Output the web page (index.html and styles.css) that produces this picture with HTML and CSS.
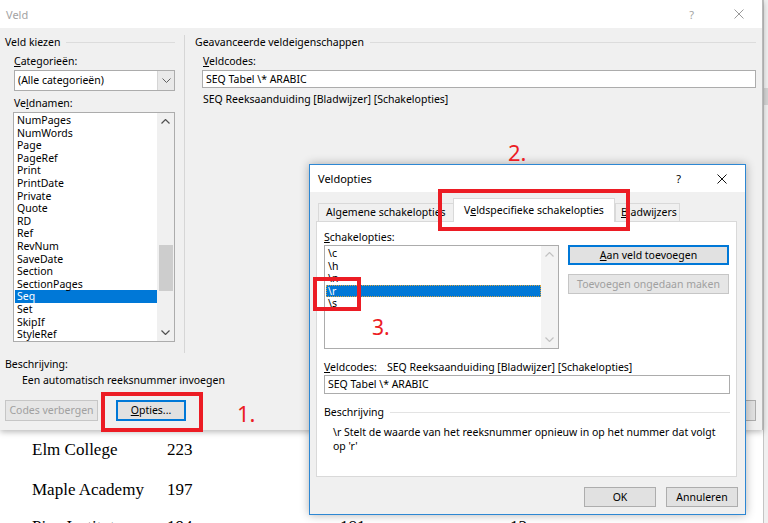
FILE: index.html
```html
<!DOCTYPE html>
<html lang="nl">
<head>
  <meta charset="UTF-8" />
  <meta name="viewport" content="width=device-width, initial-scale=1.0"/>
  <title>Veld</title>
  <link rel="stylesheet" href="styles.css">
</head>
<body>
<div class="screen">

  <div class="stage">
    <div class="veld">
      <div class="titlebar">
        <span class="title dim">Veld</span>
        <span class="help dim">?</span>
        <span class="close dim">
          <svg width="10" height="10" viewBox="0 0 10 10"><path d="M0.5 0.5 L9.5 9.5 M9.5 0.5 L0.5 9.5" stroke="#9a9a9a" stroke-width="1" fill="none"/></svg>
        </span>
      </div>

      <div class="veld-main">
        <div class="col-left">
          <div class="group-head"><span>Veld kiezen</span></div>
          <div class="indent">
            <div class="label"><u>C</u>ategorieën:</div>
            <div class="select">
              <span class="select-text">(Alle categorieën)</span>
              <span class="select-btn">
                <svg width="9" height="5" viewBox="0 0 9 5"><polyline points="0.5,0.5 4.5,4.5 8.5,0.5" stroke="#606060" fill="none"/></svg>
              </span>
            </div>
            <div class="label">Ve<u>l</u>dnamen:</div>
            <div class="listbox names">
              <ul class="items">
                <li>NumPages</li>
                <li>NumWords</li>
                <li>Page</li>
                <li>PageRef</li>
                <li>Print</li>
                <li>PrintDate</li>
                <li>Private</li>
                <li>Quote</li>
                <li>RD</li>
                <li>Ref</li>
                <li>RevNum</li>
                <li>SaveDate</li>
                <li>Section</li>
                <li>SectionPages</li>
                <li class="sel">Seq</li>
                <li>Set</li>
                <li>SkipIf</li>
                <li>StyleRef</li>
              </ul>
              <div class="vscroll">
                <span class="arrow">
                  <svg width="9" height="5" viewBox="0 0 9 5"><polyline points="0.5,4.5 4.5,0.5 8.5,4.5" stroke="#505050" stroke-width="1.2" fill="none"/></svg>
                </span>
                <div class="track"><div class="thumb"></div></div>
                <span class="arrow">
                  <svg width="9" height="5" viewBox="0 0 9 5"><polyline points="0.5,0.5 4.5,4.5 8.5,0.5" stroke="#505050" stroke-width="1.2" fill="none"/></svg>
                </span>
              </div>
            </div>
          </div>
        </div>

        <div class="col-right">
          <div class="group-head"><span>Geavanceerde veldeigenschappen</span></div>
          <div class="indent-r">
            <div class="label"><u>V</u>eldcodes:</div>
            <div class="input wide">SEQ Tabel \* ARABIC</div>
            <div class="syntax">SEQ Reeksaanduiding [Bladwijzer] [Schakelopties]</div>
          </div>
        </div>
      </div>

      <div class="veld-foot">
        <div class="label">Beschrijving:</div>
        <div class="desc">Een automatisch reeksnummer invoegen</div>
        <div class="btn-row">
          <div class="btn disabled codes">Codes verbergen</div>
          <div class="btn focus opties"><u>O</u>pties...</div>
          <div class="btn hidden-btn"></div>
        </div>
      </div>
    </div>

    <div class="doc">
      <div class="row"><span class="c1">Elm College</span><span class="c2">223</span></div>
      <div class="row"><span class="c1">Maple Academy</span><span class="c2">197</span></div>
      <div class="row last-row"><span class="c1">Pine Institute</span><span class="c2">194</span><span class="c3">181</span><span>13</span></div>
    </div>
  </div>

  <div class="edge"><div class="edge-thumb"></div></div>

  <div class="opts">
    <div class="titlebar opts-title">
      <span class="title">Veldopties</span>
      <span class="help">?</span>
      <span class="close">
        <svg width="10" height="10" viewBox="0 0 10 10"><path d="M0.5 0.5 L9.5 9.5 M9.5 0.5 L0.5 9.5" stroke="#111" stroke-width="1" fill="none"/></svg>
      </span>
    </div>

    <div class="tabs">
      <div class="tab first">Al<u>g</u>emene schakelopties</div>
      <div class="tab active">V<u>e</u>ldspecifieke schakelopties</div>
      <div class="tab last"><u>B</u>ladwijzers</div>
    </div>

    <div class="panel">
      <div class="label"><u>S</u>chakelopties:</div>
      <div class="switch-row">
        <div class="listbox switches">
          <ul class="items">
            <li>\c</li>
            <li>\h</li>
            <li>\n</li>
            <li class="sel focus-row">\r</li>
            <li>\s</li>
          </ul>
          <div class="vscroll light">
            <span class="arrow">
              <svg width="9" height="5" viewBox="0 0 9 5"><polyline points="0.5,4.5 4.5,0.5 8.5,4.5" stroke="#c2c2c2" stroke-width="1.2" fill="none"/></svg>
            </span>
            <div class="track"></div>
            <span class="arrow">
              <svg width="9" height="5" viewBox="0 0 9 5"><polyline points="0.5,0.5 4.5,4.5 8.5,0.5" stroke="#c2c2c2" stroke-width="1.2" fill="none"/></svg>
            </span>
          </div>
        </div>
        <div class="side-btns">
          <div class="btn focus"><u>A</u>an veld toevoegen</div>
          <div class="btn disabled">Toevoegen ongedaan maken</div>
        </div>
      </div>

      <div class="code-line"><span class="code-label"><u>V</u>eldcodes:</span>SEQ Reeksaanduiding [Bladwijzer] [Schakelopties]</div>
      <div class="input">SEQ Tabel \* ARABIC</div>

      <div class="group-head desc-head"><span>Beschrijving</span></div>
      <div class="switch-desc">\r Stelt de waarde van het reeksnummer opnieuw in op het nummer dat volgt<br>op 'r'</div>
    </div>

    <div class="opts-foot">
      <div class="btn">OK</div>
      <div class="btn">Annuleren</div>
    </div>
  </div>

  <div class="mark mark-1"></div>
  <div class="mark mark-2"></div>
  <div class="mark mark-3"></div>
  <div class="num num-1">1.</div>
  <div class="num num-2">2.</div>
  <div class="num num-3">3.</div>
</div>
</body>
</html>
```

FILE: styles.css
```css
* {
  box-sizing: border-box;
}
body {
  margin: 0;
  font-family: 'Noto Sans', sans-serif;
  font-size: 10.5px;
  color: #000;
  background-color: #fff;
}
u {
  text-decoration-thickness: 1px;
  text-underline-offset: 1px;
}
.screen {
  position: relative;
  display: flex;
  width: 768px;
  height: 523px;
  overflow: hidden;
}
.stage {
  width: 763px;
  flex: none;
}
.edge {
  flex: 1;
  background-color: #f0f0f0;
  border-left: 1px solid #c4c4c4;
}
.edge-thumb {
  margin-top: 88px;
  height: 17px;
  background-color: #d4d4d4;
}

/* outer dialog */
.veld {
  position: relative;
  height: 430px;
  background-color: #f0f0f0;
  border-right: 1px solid #b9b9b9;
  box-shadow: 0 2px 6px rgba(0,0,0,0.28);
}
.titlebar {
  display: flex;
  align-items: center;
  height: 28px;
  padding-left: 6px;
  background-color: #fff;
}
.title {
  flex: 1;
  font-size: 11px;
}
.dim {
  color: #a3a3a3;
}
.help {
  font-size: 11px;
  margin-right: 40px;
}
.close {
  display: flex;
  margin-right: 18px;
}
.veld-main {
  display: flex;
  height: 325px;
  padding-top: 7px;
}
.col-left {
  width: 185px;
  padding: 0 9px 0 5px;
  border-right: 1px solid #d6d6d6;
}
.col-right {
  flex: 1;
  padding: 0 6px 0 10px;
}
.group-head {
  display: flex;
  align-items: center;
  height: 14px;
  line-height: 14px;
  white-space: nowrap;
}
.group-head::after {
  content: "";
  flex: 1;
  margin-left: 6px;
  border-top: 1px solid #dcdcdc;
}
.indent {
  padding-left: 9px;
}
.indent-r {
  padding-left: 8px;
}
.label {
  height: 14px;
  line-height: 14px;
  margin-top: 5px;
}
.select {
  display: flex;
  width: 161px;
  height: 21px;
  margin-top: 2px;
  background-color: #fff;
  border: 1px solid #acacac;
}
.select-text {
  flex: 1;
  padding-left: 3px;
  line-height: 19px;
}
.select-btn {
  display: flex;
  align-items: center;
  justify-content: center;
  width: 17px;
  background-color: #e9e9e9;
  border-left: 1px solid #d5d5d5;
}
.listbox {
  display: flex;
  background-color: #fff;
  border: 1px solid #acacac;
}
.names {
  width: 162px;
  height: 230px;
  margin: 2px 0 0 -1px;
}
.items {
  flex: 1;
  list-style: none;
  margin: 0;
  padding: 1px 0 0 1px;
}
.items li {
  height: 12.6px;
  line-height: 12.6px;
  padding-left: 2px;
  white-space: nowrap;
}
.items li.sel {
  background-color: #0078d7;
  color: #fff;
}
.items li.focus-row {
  outline: 1px dotted #d9a441;
  outline-offset: -1px;
}
.vscroll {
  display: flex;
  flex-direction: column;
  width: 17px;
  background-color: #f0f0f0;
}
.arrow {
  display: flex;
  align-items: center;
  justify-content: center;
  height: 17px;
}
.track {
  flex: 1;
}
.thumb {
  margin: 115px 1px 0 2px;
  height: 46px;
  background-color: #cdcdcd;
}
.input {
  height: 19px;
  line-height: 17px;
  padding-left: 3px;
  background-color: #fff;
  border: 1px solid #acacac;
}
.input.wide {
  height: 18px;
  line-height: 16px;
  margin: 2px 0 0 -1px;
}
.syntax {
  height: 14px;
  line-height: 14px;
  margin-top: 4px;
}
.veld-foot {
  padding: 4px 0 0 5px;
}
.veld-foot .label {
  margin-top: 0;
}
.desc {
  height: 14px;
  line-height: 14px;
  margin-top: 2px;
  padding-left: 17px;
}
.btn-row {
  display: flex;
  margin-top: 13px;
}
.btn {
  height: 21px;
  line-height: 19px;
  text-align: center;
  background-color: #e1e1e1;
  border: 1px solid #adadad;
  white-space: nowrap;
}
.btn.disabled {
  color: #a0a0a0;
  background-color: #e6e6e6;
  border-color: #c6c6c6;
}
.btn.focus {
  border-color: #0078d7;
  box-shadow: inset 0 0 0 1px #0078d7;
}
.codes {
  width: 93px;
}
.opties {
  width: 70px;
  margin-left: 18px;
}
.hidden-btn {
  width: 72px;
  margin: 0 6px 0 auto;
}

/* document behind */
.doc {
  padding-left: 32px;
  font-family: 'Liberation Serif', serif;
  font-size: 17px;
}
.row {
  display: flex;
  align-items: center;
  height: 40px;
}
.last-row {
  margin-top: -3px;
}
.c1 {
  width: 135px;
}
.c2 {
  width: 173px;
}
.c3 {
  width: 170px;
}

/* Veldopties dialog */
.opts {
  position: absolute;
  left: 309px;
  top: 164px;
  width: 437px;
  height: 351px;
  display: flex;
  flex-direction: column;
  background-color: #f0f0f0;
  border: 1px solid #2d87d3;
  box-shadow: 0 0 9px rgba(0,0,0,0.3);
}
.opts-title {
  height: 27px;
  padding-left: 8px;
}
.opts-title .help {
  margin-right: 36px;
}
.tabs {
  display: flex;
  align-items: flex-end;
  height: 23px;
  margin: 6px 0 0 8px;
}
.tab {
  height: 18px;
  line-height: 17px;
  padding: 0 7px;
  background-color: #f0f0f0;
  border: 1px solid #d9d9d9;
  border-bottom: none;
  white-space: nowrap;
}
.tab.first {
  width: 137px;
  overflow: hidden;
}
.tab.active {
  position: relative;
  z-index: 2;
  width: 162px;
  height: 24px;
  margin: 0 0 -1px -2px;
  line-height: 22px;
  text-align: center;
  background-color: #fff;
}
.tab.last {
  width: 65px;
  padding: 0 5px;
}
.panel {
  height: 256px;
  margin-left: 6px;
  width: 421px;
  padding: 8px 7px 0;
  background-color: #fff;
  border: 1px solid #d9d9d9;
}
.panel > .label {
  margin-top: 0;
}
.switch-row {
  display: flex;
  margin-top: 1px;
}
.switches {
  width: 235px;
  height: 104px;
}
.vscroll.light {
  background-color: #f3f3f3;
}
.side-btns {
  display: flex;
  flex-direction: column;
  gap: 9px;
  width: 161px;
  margin-left: 9px;
}
.side-btns .btn {
  height: 20px;
  line-height: 18px;
}
.code-line {
  height: 14px;
  line-height: 14px;
  margin-top: 11px;
  white-space: nowrap;
}
.code-label {
  display: inline-block;
  width: 63px;
}
.panel .input {
  width: 406px;
  margin-top: 1px;
}
.desc-head {
  width: 406px;
  margin-top: 11px;
}
.desc-head::after {
  border-top-color: #e3e3e3;
}
.switch-desc {
  margin-top: 6px;
  padding-left: 9px;
  line-height: 14px;
}
.opts-foot {
  display: flex;
  justify-content: flex-end;
  gap: 10px;
  margin-top: 10px;
  padding-right: 7px;
}
.opts-foot .btn {
  width: 72px;
  height: 20px;
  line-height: 18px;
}

/* red annotations */
.mark {
  position: absolute;
  z-index: 5;
  border: 4px solid #ec1c24;
}
.mark-1 {
  left: 101px;
  top: 392px;
  width: 102px;
  height: 40px;
}
.mark-2 {
  left: 438px;
  top: 189px;
  width: 192px;
  height: 42px;
}
.mark-3 {
  left: 313px;
  top: 277px;
  width: 48px;
  height: 34px;
}
.num {
  position: absolute;
  z-index: 5;
  color: #ec1c24;
  font-size: 22px;
  line-height: 22px;
}
.num-1 {
  left: 237px;
  top: 402px;
}
.num-2 {
  left: 508px;
  top: 141px;
}
.num-3 {
  left: 372px;
  top: 316px;
  font-size: 21px;
}
```
